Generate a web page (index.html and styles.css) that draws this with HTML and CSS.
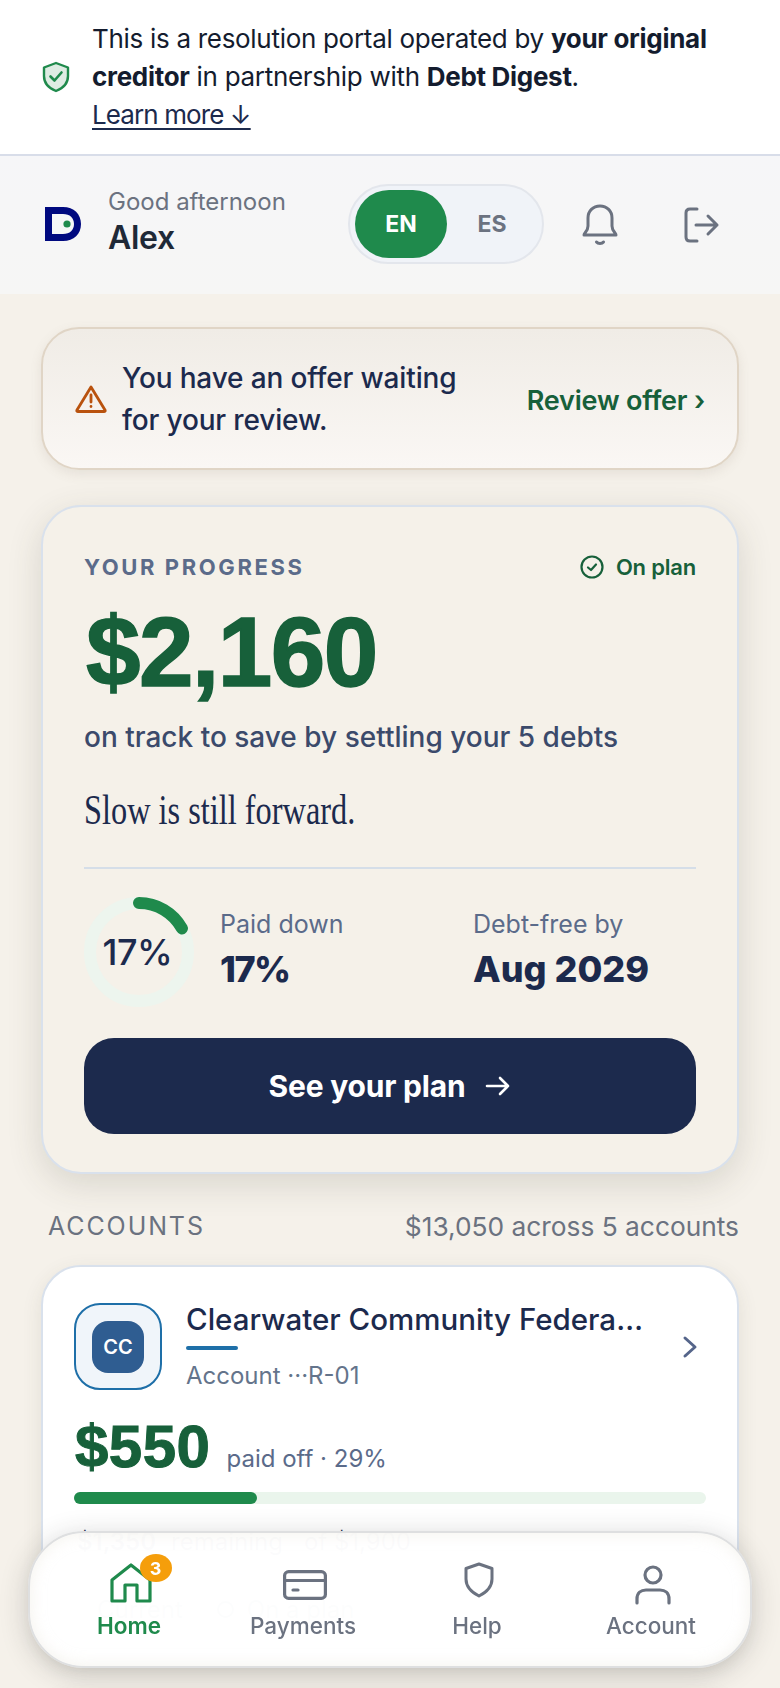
FILE: index.html
```html
<!DOCTYPE html>
<html lang="en">
<head>
  <meta charset="UTF-8">
  <meta name="viewport" content="width=device-width, initial-scale=1.0">
  <title>Debt Digest - Home</title>
  <link rel="stylesheet" href="styles.css">
</head>
<body>
  <section class="notice">
    <svg class="notice-icon" width="28" height="32" viewBox="0 0 28 32">
      <path d="M14 2 L26 6.5 V15 C26 23 20.5 27.5 14 30 C7.5 27.5 2 23 2 15 V6.5 Z" fill="#deece3" stroke="#1f8a4c" stroke-width="2.4" stroke-linejoin="round"/>
      <path d="M8.5 15.5 L12.5 19.5 L19.5 11.5" fill="none" stroke="#1f8a4c" stroke-width="2.6" stroke-linecap="round" stroke-linejoin="round"/>
    </svg>
    <p>This is a resolution portal operated by <b>your original creditor</b> in partnership with <b>Debt Digest</b>.<br><a href="#">Learn more ↓</a></p>
  </section>

  <header class="topbar">
    <svg class="logo" width="36" height="34" viewBox="0 0 36 34">
      <path fill-rule="evenodd" d="M0 0 H18 C29 0 36 7 36 17 C36 27 29 34 18 34 H0 Z M7 7 V27 H18 C25 27 29 23 29 17 C29 11 25 7 18 7 Z" fill="#00097f"/>
      <circle cx="22" cy="17" r="3.6" fill="#1f8a4c"/>
    </svg>
    <div class="greeting">
      <span>Good afternoon</span>
      <strong>Alex</strong>
    </div>
    <div class="lang">
      <span class="lang-on">EN</span>
      <span class="lang-off">ES</span>
    </div>
    <svg class="bell" width="38" height="42" viewBox="0 0 38 42" fill="none" stroke="#6b7280" stroke-width="3" stroke-linecap="round" stroke-linejoin="round">
      <path d="M3 31 C3 29 7 27 7 22 V14 C7 7 12 2 19 2 C26 2 31 7 31 14 V22 C31 27 35 29 35 31 Z"/>
      <path d="M15.5 38 C17 40 21 40 22.5 38"/>
    </svg>
    <svg class="logout" width="36" height="36" viewBox="0 0 36 36" fill="none" stroke="#6b7280" stroke-width="3" stroke-linecap="round" stroke-linejoin="round">
      <path d="M13 2 H6 C3.5 2 2 3.5 2 6 V30 C2 32.500 3.500 34 6 34 H13"/>
      <path d="M12 18 H33 M24 9 L33 18 L24 27"/>
    </svg>
  </header>

  <main>
    <section class="offer">
      <svg class="offer-icon" width="32" height="28" viewBox="0 0 32 28" fill="none" stroke="#b9520e" stroke-width="2.8" stroke-linecap="round" stroke-linejoin="round">
        <path d="M16 2 L30 25 C30.500 26 30 26.500 29 26.500 H3 C2 26.500 1.500 26 2 25 Z"/>
        <path d="M16 10 V17 M16 21.500 V21.600"/>
      </svg>
      <p>You have an offer waiting for your review.</p>
      <a href="#">Review offer ›</a>
    </section>

    <section class="progress">
      <div class="progress-top">
        <span class="eyebrow">YOUR PROGRESS</span>
        <span class="on-plan">
          <svg width="24" height="24" viewBox="0 0 24 24" fill="none" stroke="#17603a" stroke-width="2.200" stroke-linecap="round" stroke-linejoin="round">
            <circle cx="12" cy="12" r="10.500"/>
            <path d="M8 12.500 L11 15 L16 9.500"/>
          </svg>
          On plan
        </span>
      </div>
      <div class="amount">$2,160</div>
      <p class="amount-sub">on track to save by settling your 5 debts</p>
      <p class="motto">Slow is still forward.</p>
      <div class="stats">
        <div class="ring">
          <svg width="110" height="110" viewBox="0 0 110 110" fill="none" stroke-width="12">
            <circle cx="55" cy="55" r="49" stroke="#edf5ee"/>
            <circle class="ring-arc" cx="55" cy="55" r="49" stroke="#1f8a4c" stroke-linecap="round" pathLength="100" stroke-dasharray="17 100"/>
          </svg>
          <span>17%</span>
        </div>
        <div class="stat stat-paid">
          <span>Paid down</span>
          <strong>17%</strong>
        </div>
        <div class="stat">
          <span>Debt-free by</span>
          <strong>Aug 2029</strong>
        </div>
      </div>
      <a class="plan-btn" href="#">
        See your plan
        <svg width="26" height="22" viewBox="0 0 26 22" fill="none" stroke="#fff" stroke-width="2.600" stroke-linecap="round" stroke-linejoin="round">
          <path d="M2 11 H23 M15 3 L23 11 L15 19"/>
        </svg>
      </a>
    </section>

    <div class="accounts-head">
      <span class="accounts-title">ACCOUNTS</span>
      <span class="accounts-total">$13,050 across 5 accounts</span>
    </div>

    <section class="account">
      <div class="account-top">
        <div class="avatar"><span>CC</span></div>
        <div class="account-info">
          <div class="account-name">Clearwater Community Federal Credit Union</div>
          <div class="account-line"></div>
          <div class="account-no">Account ···R-01</div>
        </div>
        <svg class="chevron" width="16" height="24" viewBox="0 0 16 24" fill="none" stroke="#55658a" stroke-width="3" stroke-linecap="round" stroke-linejoin="round">
          <path d="M3 3 L13 12 L3 21"/>
        </svg>
      </div>
      <div class="paid-row">
        <span class="paid-amount">$550</span>
        <span class="paid-note">paid off · 29%</span>
      </div>
      <div class="bar"><div class="bar-fill" style="width: 29%"></div></div>
      <div class="balance-row">
        <b>$1,350</b>
        <span>remaining</span>
        <span class="balance-of">of $1,900</span>
      </div>
      <div class="tags">
        <span>Current</span>
        <span class="tag-plan">On a plan</span>
      </div>
    </section>

    <section class="account account-next"></section>
  </main>

  <nav class="tabs">
    <a class="tab tab-active" href="#">
      <span class="tab-icon">
        <svg width="42" height="40" viewBox="0 0 42 40" fill="none" stroke="#1f8a4c" stroke-width="3.200" stroke-linejoin="round">
          <path d="M21 2 L40 17 V38 H27 V22 H15 V38 H2 V17 Z"/>
        </svg>
        <span class="badge">3</span>
      </span>
      Home
    </a>
    <a class="tab" href="#">
      <span class="tab-icon tab-icon-low">
        <svg width="44" height="30" viewBox="0 0 44 30" fill="none" stroke="#6b7280" stroke-width="3.200" stroke-linecap="round" stroke-linejoin="round">
          <rect x="1.600" y="1.600" width="40.800" height="26.800" rx="4"/>
          <path d="M2 10.500 H42 M10 20 H15" />
        </svg>
      </span>
      Payments
    </a>
    <a class="tab" href="#">
      <span class="tab-icon tab-icon-help">
        <svg width="30" height="36" viewBox="0 0 30 36" fill="none" stroke="#6b7280" stroke-width="3" stroke-linejoin="round">
          <path d="M15 2 L28 6.500 V17 C28 25 22 30.500 15 34 C8 30.500 2 25 2 17 V6.500 Z"/>
        </svg>
      </span>
      Help
    </a>
    <a class="tab" href="#">
      <span class="tab-icon tab-icon-low">
        <svg width="36" height="40" viewBox="0 0 36 40" fill="none" stroke="#6b7280" stroke-width="3.200" stroke-linecap="round">
          <circle cx="18" cy="10" r="8"/>
          <path d="M2 38 V34 C2 28 6 25 11 25 H25 C30 25 34 28 34 34 V38"/>
        </svg>
      </span>
      Account
    </a>
  </nav>
</body>
</html>
```

FILE: styles.css
```css
* {
  box-sizing: border-box;
}

html, body {
  height: 1688px;
  overflow: hidden;
}

body {
  margin: 0;
  background-color: #f5f1ea;
  font-family: Inter, "Noto Sans", sans-serif;
  color: #1c2a4d;
}

p {
  margin: 0;
}

a {
  color: inherit;
  text-decoration: none;
}

/* Notice banner */
.notice {
  display: flex;
  align-items: center;
  gap: 22px;
  height: 156px;
  padding: 0 42px;
  background: #fff;
  border-bottom: 2px solid #d8dde9;
}

.notice-icon {
  flex-shrink: 0;
}

.notice p {
  font-size: 26px;
  line-height: 38px;
  letter-spacing: -0.3px;
  color: #141c2e;
}

.notice b {
  font-weight: 700;
}

.notice a {
  color: #1c2a4d;
  letter-spacing: -0.9px;
  text-decoration: underline;
  text-underline-offset: 4px;
}

/* Top bar */
.topbar {
  display: flex;
  align-items: center;
  height: 138px;
  padding: 0 0 0 45px;
  background: linear-gradient(#f6f6f8, #f6f6f5);
}

.logo {
  flex-shrink: 0;
  margin-bottom: 2px;
}

.greeting {
  display: flex;
  flex-direction: column;
  width: 240px;
  margin-left: 27px;
  margin-bottom: 6px;
  font-size: 24px;
  color: #6b7280;
}

.greeting strong {
  margin-top: 2px;
  font-size: 32px;
  font-weight: 600;
  letter-spacing: -0.3px;
  color: #1f2937;
}

.lang {
  display: flex;
  align-items: center;
  width: 196px;
  height: 80px;
  margin-bottom: 2px;
  padding: 0 5px;
  background: #f0f3f8;
  border: 2px solid #e3e6ec;
  border-radius: 40px;
  font-size: 23px;
  font-weight: 700;
}

.lang-on {
  display: flex;
  align-items: center;
  justify-content: center;
  width: 92px;
  height: 68px;
  background: #1f8a4c;
  border-radius: 34px;
  color: #fff;
}

.lang-off {
  flex: 1;
  text-align: center;
  color: #6b7280;
}

.bell {
  margin-left: 37px;
}

.logout {
  margin-left: 65px;
}

/* Main column */
main {
  height: 1394px;
  overflow: hidden;
  padding: 33px 41px 0;
}

.offer {
  display: flex;
  align-items: center;
  height: 143px;
  padding: 0 32px;
  background: linear-gradient(#f0ece6, #faf7f4);
  border: 2px solid #e0d5c6;
  border-radius: 38px;
  box-shadow: 0 4px 12px rgba(120, 110, 90, 0.12);
}

.offer-icon {
  flex-shrink: 0;
}

.offer p {
  width: 340px;
  margin-left: 15px;
  font-size: 28px;
  font-weight: 500;
  line-height: 42px;
  letter-spacing: -0.15px;
}

.offer a {
  margin-left: auto;
  margin-top: 3px;
  font-size: 27px;
  font-weight: 600;
  letter-spacing: -0.2px;
  white-space: nowrap;
  color: #17603a;
}

/* Progress card */
.progress {
  height: 669px;
  margin-top: 35px;
  padding: 42px 41px 0;
  background: #f5f1e9;
  border: 2px solid #d9e1ec;
  border-radius: 40px;
  box-shadow: 0 10px 34px rgba(70, 70, 50, 0.16);
}

.progress-top {
  display: flex;
  align-items: center;
  justify-content: space-between;
  height: 36px;
}

.eyebrow {
  font-size: 22px;
  font-weight: 700;
  letter-spacing: 2.6px;
  color: #5b6b8a;
}

.on-plan {
  display: flex;
  align-items: center;
  gap: 12px;
  font-size: 22px;
  font-weight: 600;
  letter-spacing: -0.2px;
  color: #17603a;
}

.amount {
  margin-top: 12px;
  margin-left: 2px;
  font-family: "Liberation Sans", Arial, sans-serif;
  font-size: 98px;
  font-weight: 700;
  line-height: 111px;
  letter-spacing: -1.5px;
  color: #17603a;
  -webkit-text-stroke: 1.5px #17603a;
}

.amount-sub {
  margin-top: 9px;
  font-size: 28px;
  font-weight: 500;
  line-height: 40px;
  color: #3b4a6b;
}

.motto {
  margin-top: 29px;
  font-family: "Liberation Serif", "Times New Roman", serif;
  font-size: 42px;
  line-height: 48px;
  color: #1c2a4d;
  transform: scaleX(0.77);
  transform-origin: left center;
}

.stats {
  display: flex;
  align-items: center;
  margin-top: 33px;
  padding-top: 28px;
  border-top: 2px solid #d5dee8;
}

.ring {
  position: relative;
  flex-shrink: 0;
  width: 110px;
  height: 110px;
}

.ring svg {
  display: block;
}

.ring-arc {
  transform: rotate(-90deg);
  transform-origin: 55px 55px;
}

.ring span {
  position: absolute;
  inset: 0 3px 0 0;
  display: flex;
  align-items: center;
  justify-content: center;
  font-size: 36px;
  font-weight: 500;
  letter-spacing: -0.5px;
  color: #1c2a4d;
}

.stat {
  display: flex;
  flex-direction: column;
  gap: 8px;
  margin-bottom: 4px;
  font-size: 25px;
  color: #5b6b8a;
}

.stat-paid {
  width: 253px;
  margin-left: 26px;
}

.stat strong {
  font-size: 36px;
  font-weight: 800;
  color: #1c2a4d;
}

.stat-paid strong {
  letter-spacing: -1.5px;
}

.plan-btn {
  display: flex;
  align-items: center;
  justify-content: center;
  gap: 20px;
  height: 96px;
  margin-top: 31px;
  background: #1c2a4d;
  border-radius: 30px;
  font-size: 30px;
  font-weight: 700;
  letter-spacing: -0.2px;
  color: #fff;
}

/* Accounts */
.accounts-head {
  display: flex;
  align-items: center;
  justify-content: space-between;
  height: 36px;
  margin-top: 34px;
  padding-left: 7px;
  font-size: 25px;
  color: #6b7280;
}

.accounts-title {
  letter-spacing: 1.9px;
}

.accounts-total {
  font-size: 26.3px;
}

.account {
  height: 395px;
  margin-top: 21px;
  padding: 34px 31px 0;
  background: #fff;
  border: 2px solid #d9e1ec;
  border-radius: 40px;
  box-shadow: 0 6px 20px rgba(70, 70, 50, 0.1);
}

.account-top {
  display: flex;
  align-items: center;
}

.avatar {
  display: flex;
  align-items: center;
  justify-content: center;
  flex-shrink: 0;
  width: 88px;
  height: 87px;
  background: #f0f5fa;
  border: 2px solid #1e6fa8;
  border-radius: 26px;
}

.avatar span {
  display: flex;
  align-items: center;
  justify-content: center;
  width: 52px;
  height: 52px;
  background: #2f5d91;
  border-radius: 16px;
  font-size: 20px;
  font-weight: 600;
  color: #fff;
}

.account-info {
  flex: 1;
  min-width: 0;
  margin-left: 24px;
}

.account-name {
  width: 458px;
  overflow: hidden;
  font-size: 29.5px;
  font-weight: 500;
  line-height: 36px;
  white-space: nowrap;
  text-overflow: ellipsis;
}

.account-line {
  width: 52px;
  height: 4px;
  margin-top: 9px;
  background: #1e6fa8;
  border-radius: 2px;
}

.account-no {
  margin-top: 10px;
  font-size: 24px;
  line-height: 32px;
  color: #64748b;
}

.chevron {
  flex-shrink: 0;
  margin-right: 8px;
}

.paid-row {
  display: flex;
  align-items: baseline;
  gap: 16px;
  margin-top: 23px;
  margin-left: 1px;
}

.paid-amount {
  font-family: "Liberation Sans", Arial, sans-serif;
  font-size: 60px;
  font-weight: 700;
  line-height: 64px;
  letter-spacing: 0.5px;
  color: #17603a;
  -webkit-text-stroke: 1px #17603a;
}

.paid-note {
  font-size: 24px;
  color: #5b6b8a;
}

.bar {
  height: 12px;
  margin-top: 13px;
  background: #eaf5ec;
  border-radius: 6px;
}

.bar-fill {
  height: 100%;
  background: #1f8a4c;
  border-radius: 6px;
}

.balance-row {
  display: flex;
  gap: 15px;
  margin-top: 22px;
  margin-left: 3px;
  font-size: 24px;
  line-height: 32px;
  color: #1c2a4d;
}

.balance-row b {
  font-weight: 600;
}

.balance-of {
  margin-left: 6px;
}

.tags {
  display: flex;
  gap: 34px;
  margin-top: 37px;
  margin-left: 23px;
  font-size: 24px;
  color: #64748b;
}

.tag-plan {
  display: flex;
  align-items: center;
  gap: 13px;
}

.tag-plan::before {
  content: "";
  width: 13px;
  height: 13px;
  border: 2px solid #64748b;
  border-radius: 50%;
}

.account-next {
  margin-top: 30px;
}

/* Bottom tabs */
.tabs {
  position: fixed;
  left: 28px;
  top: 1531px;
  display: grid;
  grid-template-columns: repeat(4, 174px);
  width: 724px;
  height: 137px;
  padding: 25px 12px 0;
  background: rgba(255, 255, 255, 0.985);
  border: 2px solid #dedfe0;
  border-radius: 56px;
  box-shadow: 0 6px 28px rgba(40, 40, 40, 0.22), inset 0 0 16px rgba(240, 236, 228, 0.7);
}

.tab {
  display: flex;
  flex-direction: column;
  align-items: center;
  font-size: 22.5px;
  font-weight: 500;
  color: #6b7280;
}

.tab-icon {
  position: relative;
  display: flex;
  align-items: center;
  justify-content: center;
  height: 50px;
  margin-bottom: 4px;
  margin-left: 3px;
}

.tab-icon-low svg {
  margin-top: 3px;
}

.tab-icon-help svg {
  margin-bottom: 6px;
}

.tab-active {
  font-weight: 600;
  color: #1f8a4c;
}

.badge {
  position: absolute;
  top: -4px;
  right: -20px;
  display: flex;
  align-items: center;
  justify-content: center;
  width: 32px;
  height: 28px;
  background: #f59e0b;
  border-radius: 50%;
  font-size: 18px;
  font-weight: 700;
  color: #fff;
}
```
